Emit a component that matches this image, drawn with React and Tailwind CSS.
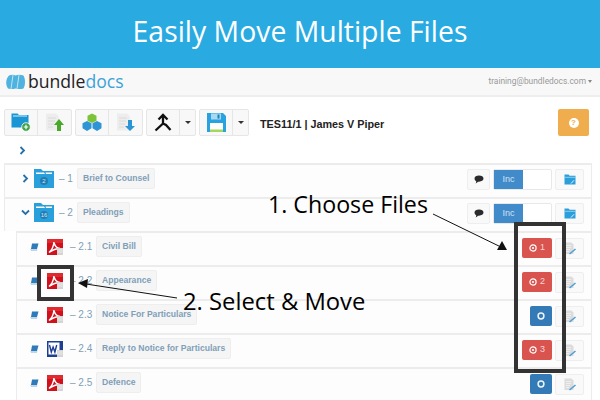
import React from 'react';

const PdfIcon = () => (
  <svg width="16" height="16" viewBox="0 0 16 16" className="shrink-0">
    <rect width="16" height="16" fill="#d0111b" />
    <rect x="0" y="0" width="16" height="4" fill="#e02a2f" />
    <path d="M2 13.500 C5 11 6.500 8 7 3 C7.500 7 9 9 13 9.500 C9 9.500 5.500 11 2 13.500Z" fill="none" stroke="#fff" strokeWidth="1.500" />
    <rect x="10" y="9" width="6" height="7" fill="#d4d4d4" />
    <path d="M10.500 11h5M10.500 13h5" stroke="#f2f2f2" strokeWidth="0.800" />
  </svg>
);

const WordIcon = () => (
  <svg width="16" height="16" viewBox="0 0 16 16" className="shrink-0">
    <rect width="16" height="16" fill="#1c3f94" />
    <rect x="1.500" y="1.500" width="11" height="12" fill="#fff" />
    <path d="M2.500 4l1.800 7 1.800-5 1.800 5 1.800-7" fill="none" stroke="#1c3f94" strokeWidth="1.400" />
    <rect x="10" y="9" width="6" height="7" fill="#d4d4d4" />
    <path d="M10.500 11h5M10.500 13h5" stroke="#f2f2f2" strokeWidth="0.800" />
  </svg>
);

const BookIcon = () => (
  <svg width="9" height="8" viewBox="0 0 9 8" className="shrink-0">
    <path d="M2 0.500h6.500L7 6H1z" fill="#2f7ab8" />
    <path d="M0.500 6.300C0.600 7.400 1 7.600 1.600 7.600H7l0.400-1H1.400z" fill="#7fb2d8" />
  </svg>
);

const FolderIcon = ({ count }) => (
  <svg width="20" height="19" viewBox="0 0 20 19" className="shrink-0">
    <path d="M0 0h7l2 2h11v17H0z" fill="#29a0dc" />
    <path d="M2 3.500h8l1 1.500H2z M11.500 3.500H18v1.500h-6z" fill="#fff" />
    <circle cx="10" cy="12" r="4" fill="#1f6f9f" opacity="0.7" />
    <text x="10" y="14" textAnchor="middle" fontSize="6" fill="#cfe6f4" fontFamily="Liberation Sans, sans-serif">{count}</text>
  </svg>
);

const CommentIcon = () => (
  <svg width="10" height="9" viewBox="0 0 10 9">
    <path d="M5 0.500C7.600 0.500 9.500 1.800 9.500 3.600S7.600 6.700 5 6.700l-1 0C3.400 7.600 2.600 8.200 1.600 8.400 2.100 7.700 2.300 7 2.200 6.200 1.100 5.700 0.500 4.700 0.500 3.600 0.500 1.800 2.400 0.500 5 0.500Z" fill="#2b2b2b" />
  </svg>
);

const OpenFolderIcon = () => (
  <svg width="12" height="11" viewBox="0 0 12 11">
    <path d="M0.500 0.500h4l1.200 1.300h5.800v8.700H0.500z" fill="#2a9fdc" />
    <path d="M0.500 3.300h11" stroke="#bfe3f6" strokeWidth="0.700" />
    <path d="M7 9.500l3-3.200" stroke="#e8f5fc" strokeWidth="1" />
  </svg>
);

const EditDocIcon = () => (
  <svg width="12" height="13" viewBox="0 0 12 13">
    <path d="M0.500 0.500h7l2 2v9.500h-9z" fill="#dcdcdc" />
    <path d="M2 3.500h5M2 5.500h5M2 7.500h4M2 9.500h3" stroke="#f4f4f4" strokeWidth="0.800" />
    <path d="M5.500 12l6-5" stroke="#4f9fd6" strokeWidth="1.600" />
  </svg>
);

const TargetIcon = () => (
  <svg width="8" height="8" viewBox="0 0 8 8" className="shrink-0">
    <circle cx="4" cy="4" r="3.100" fill="none" stroke="#fff" strokeWidth="1.200" />
    <circle cx="4" cy="4" r="1.100" fill="#fff" />
  </svg>
);

const RingIcon = () => (
  <svg width="8" height="8" viewBox="0 0 8 8" className="shrink-0">
    <circle cx="4" cy="4" r="2.900" fill="none" stroke="#eef5fa" strokeWidth="1.500" />
  </svg>
);

const Caret = () => <span className="w-0 h-0 border-x-[3px] border-x-transparent border-t-[3px] border-t-[#333]" />;

const ToolBtn = ({ children, w = 'w-[33px]' }) => (
  <div className={`${w} h-full flex items-center justify-center border-r border-[#e6e6e6] last:border-r-0`}>{children}</div>
);

const ToolGroup = ({ children }) => (
  <div className="flex h-[27px] bg-[#f8f8f8] border border-[#e6e6e6] rounded-[2px]">{children}</div>
);

const Label = ({ children }) => (
  <span className="h-[21px] px-[5px] flex items-center bg-[#f5f5f5] border border-[#eeeeee] rounded-[2px] text-[8.600px] font-bold text-[#7f9fb8] whitespace-nowrap">
    {children}
  </span>
);

const GhostBtn = ({ children, w }) => (
  <div className={`${w} h-[21px] flex items-center justify-center bg-[#f9f9f9] border border-[#eeeeee] rounded-[2px]`}>{children}</div>
);

const folders = [
  { num: '1', title: 'Brief to Counsel', count: '2', open: false },
  { num: '2', title: 'Pleadings', count: '16', open: true },
];

const files = [
  { num: '2.1', title: 'Civil Bill', picked: '1' },
  { num: '2.2', title: 'Appearance', picked: '2' },
  { num: '2.3', title: 'Notice For Particulars' },
  { num: '2.4', title: 'Reply to Notice for Particulars', picked: '3', word: true },
  { num: '2.5', title: 'Defence' },
];

function FolderRow({ row }) {
  return (
    <div className="h-[34px] ml-[4px] mr-[8px] pl-[16px] pr-[7px] pb-[5px] flex items-center bg-[#fdfdfd] border-x border-t-[2px] border-[#ececec]">
      <span className="w-[13px] flex justify-start">
        <svg width="9" height="9" viewBox="0 0 9 9">
          <path d={row.open ? 'M1 2.500l3.500 3.500 3.500-3.500' : 'M2.500 1l3.500 3.500-3.500 3.500'} fill="none" stroke="#2672a8" strokeWidth="1.800" />
        </svg>
      </span>
      <FolderIcon count={row.count} />
      <span className="ml-[5px] w-[18px] text-[10px] text-[#7f9fb8] whitespace-nowrap">– {row.num}</span>
      <Label>{row.title}</Label>
      <div className="ml-auto mt-[2px] flex items-center gap-[3px]">
        <GhostBtn w="w-[23px]"><CommentIcon /></GhostBtn>
        <div className="w-[59px] h-[21px] flex bg-white border border-[#e8e8e8] rounded-[2px]">
          <span className="w-[29px] flex items-center justify-center bg-[#428bca] text-[9px] text-[#cfe3f3]">Inc</span>
        </div>
        <GhostBtn w="w-[29px]"><OpenFolderIcon /></GhostBtn>
      </div>
    </div>
  );
}

function FileRow({ row }) {
  return (
    <div className="h-[34px] ml-[16px] mr-[8px] pl-[13px] pr-[7px] pb-[5px] flex items-center bg-[#fdfdfd] border-x border-t-[2px] border-[#ececec]">
      <BookIcon />
      <span className="ml-[8px]">{row.word ? <WordIcon /> : <PdfIcon />}</span>
      <span className="ml-[7px] w-[26px] text-[10px] text-[#7f9fb8] whitespace-nowrap">– {row.num}</span>
      <Label>{row.title}</Label>
      <div className="ml-auto mt-[3px] flex items-center gap-[3px]">
        {row.picked ? (
          <div className="w-[30px] h-[20px] flex items-center justify-center gap-[3px] bg-[#d9534f] rounded-[2px] text-[9px] text-[#f6d5d4]">
            <TargetIcon />
            {row.picked}
          </div>
        ) : (
          <div className="w-[22px] h-[20px] flex items-center justify-center bg-[#337ab7] rounded-[2px]">
            <RingIcon />
          </div>
        )}
        <GhostBtn w="w-[29px]"><EditDocIcon /></GhostBtn>
      </div>
    </div>
  );
}

export default function App() {
  return (
    <div className="relative w-[600px] h-[400px] overflow-hidden bg-white font-['Liberation_Sans',sans-serif]">
      <div className="h-[68px] bg-[#29abe2] flex items-center justify-center text-[28.400px] text-white font-['Open_Sans',sans-serif] pb-[5px]">
        Easily Move Multiple Files
      </div>

      <div className="h-[29px] pl-[5px] pr-[8px] flex items-center bg-[#f8f8f8] border-b-2 border-[#eeeeee]">
        <svg width="21" height="16" viewBox="0 0 21 16">
          <path d="M4 1.500C7 0.500 9 0.800 10.500 1.500 13 0.500 16 0.800 18.500 1.500 20.500 5 20.500 11 18.500 14.500 16 15.300 13 15.300 10.500 14.500 8 15.300 6 15.300 3 14.500 0.500 11 0.500 5 4 1.500Z" fill="#4fb3e0" />
          <path d="M8 1l-2 14M14 1l-2 14" stroke="#bfe3f5" strokeWidth="1" />
        </svg>
        <span className="ml-[2px] text-[17.600px] leading-none font-medium text-[#222] font-['Open_Sans',sans-serif]">
          bundle<span className="text-[#3aa3d8]">docs</span>
        </span>
        <span className="ml-auto text-[8.400px] font-['Roboto',sans-serif] text-[#999]">training@bundledocs.com</span>
        <span className="ml-[2px] w-0 h-0 border-x-[2.500px] border-x-transparent border-t-[3px] border-t-[#888]" />
      </div>

      <div className="h-[27px] mt-[12px] pl-[4px] pr-[11px] flex items-center gap-[3px]">
        <ToolGroup>
          <ToolBtn>
            <svg width="20" height="19" viewBox="0 0 20 19">
              <path d="M0.500 0.500h6l1.500 1.500h9.500v12.500H0.500z" fill="#1a96d4" />
              <path d="M2 3h14" stroke="#d5eefa" strokeWidth="1" />
              <circle cx="15" cy="14" r="4.300" fill="#3fa047" stroke="#fff" strokeWidth="0.800" />
              <path d="M12.800 14h4.400M15 11.800v4.400" stroke="#fff" strokeWidth="1.200" />
            </svg>
          </ToolBtn>
          <ToolBtn>
            <svg width="20" height="19" viewBox="0 0 20 19">
              <path d="M1 0.500h10l3 3v14H1z" fill="#ededed" />
              <path d="M3 5h8M3 8h7M3 11h6M3 14h5" stroke="#dadada" strokeWidth="1" />
              <path d="M14 6l5 6h-3v6h-4v-6H9z" fill="#4aa829" />
            </svg>
          </ToolBtn>
        </ToolGroup>
        <ToolGroup>
          <ToolBtn>
            <svg width="20" height="19" viewBox="0 0 20 19">
              <path d="M10 0.500l4.500 2.200v5L10 10 5.500 7.700v-5z" fill="#7cc33a" />
              <path d="M5 8l4.500 2.300v5L5 18 0.500 15.300v-5z" fill="#2f94d6" />
              <path d="M15 8l4.500 2.300v5L15 18l-4.500-2.700v-5z" fill="#2f94d6" />
            </svg>
          </ToolBtn>
          <ToolBtn>
            <svg width="20" height="19" viewBox="0 0 20 19">
              <path d="M1 0.500h10l3 3v14H1z" fill="#ededed" />
              <path d="M3 5h8M3 8h7M3 11h6M3 14h5" stroke="#dadada" strokeWidth="1" />
              <path d="M12 7h4v6h3l-5 5-5-5h3z" fill="#2a94d6" />
            </svg>
          </ToolBtn>
        </ToolGroup>
        <ToolGroup>
          <ToolBtn>
            <svg width="18" height="19" viewBox="0 0 18 19">
              <path d="M4.500 6.500L9 2l4.500 4.500M9 2V10.500L1.500 17.500M9 10.500L12 12L16.500 17" fill="none" stroke="#111" strokeWidth="2.300" />
            </svg>
          </ToolBtn>
          <ToolBtn w="w-[15px]"><Caret /></ToolBtn>
        </ToolGroup>
        <ToolGroup>
          <ToolBtn>
            <svg width="19" height="19" viewBox="0 0 19 19">
              <path d="M0 0h16l3 3v16H0z" fill="#29a3e0" />
              <rect x="4" y="0.500" width="10" height="6" fill="#a9d9f2" />
              <rect x="10.500" y="1.500" width="2" height="4" fill="#1a80b8" />
              <rect x="3" y="10" width="13" height="9" fill="#fff" />
              <rect x="3" y="16.500" width="13" height="2.500" fill="#a6d65a" />
            </svg>
          </ToolBtn>
          <ToolBtn w="w-[15px]"><Caret /></ToolBtn>
        </ToolGroup>
        <span className="ml-[8px] mt-[3px] text-[10.800px] font-bold text-[#222] whitespace-nowrap">TES11/1 | James V Piper</span>
        <div className="ml-auto w-[31px] h-[27px] flex items-center justify-center bg-[#f0ad4e] rounded-[2px]">
          <span className="w-[10px] h-[10px] flex items-center justify-center rounded-full bg-white text-[8px] leading-none font-bold text-[#f0ad4e]">?</span>
        </div>
      </div>

      <div className="h-[27px] pl-[19px] flex items-center">
        <svg width="7" height="9" viewBox="0 0 7 9" className="mt-[2px]">
          <path d="M1.500 1l3.500 3.500-3.500 3.500" fill="none" stroke="#2672a8" strokeWidth="1.800" />
        </svg>
      </div>

      {folders.map((row) => <FolderRow key={row.num} row={row} />)}
      {files.map((row) => <FileRow key={row.num} row={row} />)}

      {/* annotations over the page */}
      <div className="absolute left-[37px] top-[265px] w-[37px] h-[36px] border-[4px] border-[#333]" />
      <div className="absolute left-[514px] top-[222px] w-[52px] h-[151px] border-[4px] border-[#333]" />
      <span className="absolute left-[268px] top-[188px] text-[23.200px] leading-[32px] text-black font-['Open_Sans',sans-serif] whitespace-nowrap">1. Choose Files</span>
      <span className="absolute left-[183px] top-[285px] text-[23.800px] leading-[32px] text-black font-['Open_Sans',sans-serif] whitespace-nowrap">2. Select &amp; Move</span>
      <svg className="absolute left-0 top-0" width="600" height="400" viewBox="0 0 600 400">
        <path d="M433 214L505 249" stroke="#111" strokeWidth="1" />
        <path d="M507 250L497 250L502 241Z" fill="#111" />
        <path d="M177 298L86 284" stroke="#111" strokeWidth="1" />
        <path d="M78 283L88 279L87 288Z" fill="#111" />
      </svg>
    </div>
  );
}
